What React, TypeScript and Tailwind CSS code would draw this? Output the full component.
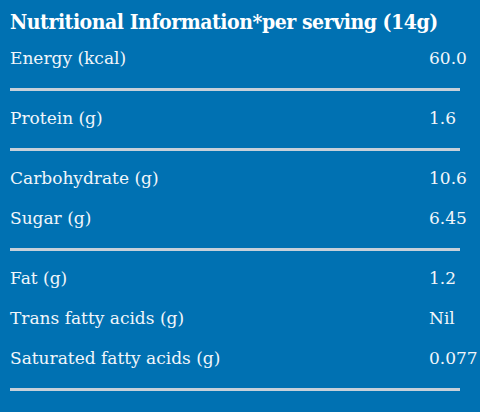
import React from 'react';

interface Nutrient {
  label: string;
  value: string;
}

const groups: Nutrient[][] = [
  [{ label: 'Energy (kcal)', value: '60.0' }],
  [{ label: 'Protein (g)', value: '1.6' }],
  [
    { label: 'Carbohydrate (g)', value: '10.6' },
    { label: 'Sugar (g)', value: '6.45' },
  ],
  [
    { label: 'Fat (g)', value: '1.2' },
    { label: 'Trans fatty acids (g)', value: 'Nil' },
    { label: 'Saturated fatty acids (g)', value: '0.077' },
  ],
];

const Row: React.FC<Nutrient> = ({ label, value }) => (
  <div className="grid grid-cols-[419px_1fr] items-center h-[40px] text-[17px] text-[#f2f6fa]">
    <span>{label}</span>
    <span>{value}</span>
  </div>
);

const App: React.FC = () => {
  return (
    <div className="w-[480px] h-[412px] overflow-hidden bg-[#0071b2] font-['DejaVu_Serif',serif]">
      <div className="pl-[10px]">
        <h2 className="h-[39px] pt-[4px] flex items-center text-[21px] font-bold text-white font-['DejaVu_Serif_Condensed','DejaVu_Serif',serif] tracking-[-0.45px]">
          Nutritional Information*per serving (14g)
        </h2>
        {groups.map((rows, i) => (
          <div key={i}>
            <div className={i === 0 ? 'pb-[9px]' : 'pt-[8px] pb-[9px]'}>
              {rows.map((r) => (
                <Row key={r.label} {...r} />
              ))}
            </div>
            <div className="w-[450px] h-[3px] bg-[#c6d0da]" />
          </div>
        ))}
      </div>
    </div>
  );
};

export default App;
